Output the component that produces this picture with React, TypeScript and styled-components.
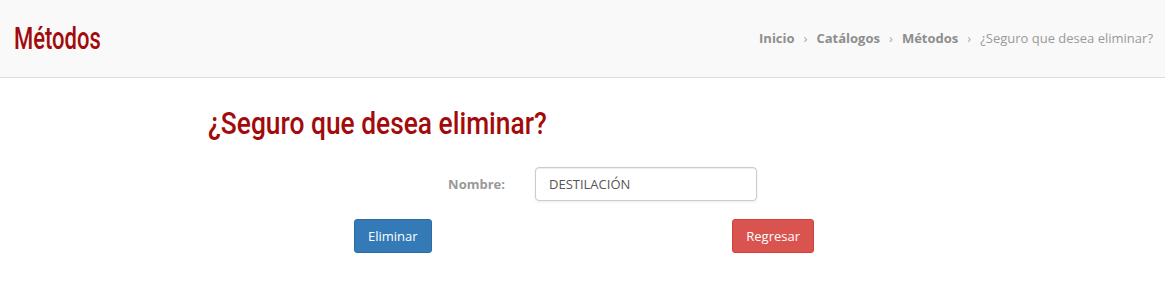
import React from 'react';
import styled, { createGlobalStyle } from 'styled-components';

const GlobalStyle = createGlobalStyle`
  html, body {
    margin: 0;
    padding: 0;
    background: #ffffff;
    font-family: 'Open Sans', 'Liberation Sans', sans-serif;
  }
`;

// Oswald is not installed: a medium Roboto squeezed sideways stands in for it
const display = `Roboto, 'Liberation Sans', sans-serif`;

const Header = styled.header`
  height: 78px;
  box-sizing: border-box;
  background: #f9f9f9;
  border-bottom: 1px solid #dedede;
  display: flex;
  align-items: center;
  justify-content: space-between;
  padding: 0 12px 0 14px;
`;

const Squeeze = styled.span<{ $x: number }>`
  display: inline-block;
  transform: scaleX(${(p) => p.$x});
  transform-origin: left center;
  white-space: nowrap;
`;

const PageTitle = styled.h1`
  margin: 0;
  font-family: ${display};
  font-weight: 500;
  font-size: 31px;
  line-height: 40px;
  color: #a30a0a;
  width: 120px;
`;

const Breadcrumb = styled.nav`
  display: flex;
  align-items: center;
  font-size: 13px;
  color: #999;
  padding-bottom: 1px;
`;

const Crumb = styled.span<{ $active?: boolean }>`
  font-weight: ${(p) => (p.$active ? 400 : 700)};
  color: ${(p) => (p.$active ? '#999' : '#8e8e8e')};
`;

const Sep = styled.span`
  color: #aaa;
  padding: 0 9px;
  font-size: 13px;
`;

const Main = styled.main`
  padding: 0 0 0 208px;
`;

const Question = styled.h2`
  margin: 26px 0 0 0;
  font-family: ${display};
  font-weight: 500;
  font-size: 31px;
  color: #a30a0a;
  line-height: 40px;
`;

const FieldRow = styled.div`
  display: flex;
  align-items: center;
  margin-top: 23px;
`;

const Label = styled.label`
  width: 297px;
  text-align: right;
  font-size: 13px;
  font-weight: 700;
  color: #999;
  padding-right: 30px;
`;

const Input = styled.input`
  width: 222px;
  height: 34px;
  box-sizing: border-box;
  border: 1px solid #ccc;
  border-radius: 4px;
  box-shadow: inset 0 1px 1px rgba(0, 0, 0, 0.075), 0 1px 3px rgba(0, 0, 0, 0.08);
  padding: 6px 13px;
  font-family: 'Open Sans', 'Liberation Sans', sans-serif;
  font-size: 13px;
  color: #555;
  outline: none;
`;

const ButtonRow = styled.div`
  display: flex;
  align-items: center;
  margin-top: 18px;
  padding-left: 146px;
`;

const Buttons = styled.div`
  display: flex;
  width: 460px;
`;

const Button = styled.button<{ $variant: 'primary' | 'danger' }>`
  height: 34px;
  box-sizing: border-box;
  padding: 0 13px;
  border-radius: 3px;
  font-family: 'Open Sans', 'Liberation Sans', sans-serif;
  font-size: 13px;
  color: #fff;
  cursor: pointer;
  background: ${(p) => (p.$variant === 'primary' ? '#337ab7' : '#d9534f')};
  border: 1px solid ${(p) => (p.$variant === 'primary' ? '#2e6da4' : '#d43f3a')};
  margin-left: ${(p) => (p.$variant === 'danger' ? 'auto' : '0')};
`;

export default function App() {
  return (
    <>
      <GlobalStyle />
      <Header>
        <PageTitle>
          <Squeeze $x={0.71}>Métodos</Squeeze>
        </PageTitle>
        <Breadcrumb>
          <Crumb>Inicio</Crumb>
          <Sep>›</Sep>
          <Crumb>Catálogos</Crumb>
          <Sep>›</Sep>
          <Crumb>Métodos</Crumb>
          <Sep>›</Sep>
          <Crumb $active>¿Seguro que desea eliminar?</Crumb>
        </Breadcrumb>
      </Header>
      <Main>
        <Question>
          <Squeeze $x={0.85}>¿Seguro que desea eliminar?</Squeeze>
        </Question>
        <FieldRow>
          <Label htmlFor="nombre">Nombre:</Label>
          <Input id="nombre" defaultValue="DESTILACIÓN" readOnly />
        </FieldRow>
        <ButtonRow>
          <Buttons>
            <Button $variant="primary">Eliminar</Button>
            <Button $variant="danger">Regresar</Button>
          </Buttons>
        </ButtonRow>
      </Main>
    </>
  );
}
